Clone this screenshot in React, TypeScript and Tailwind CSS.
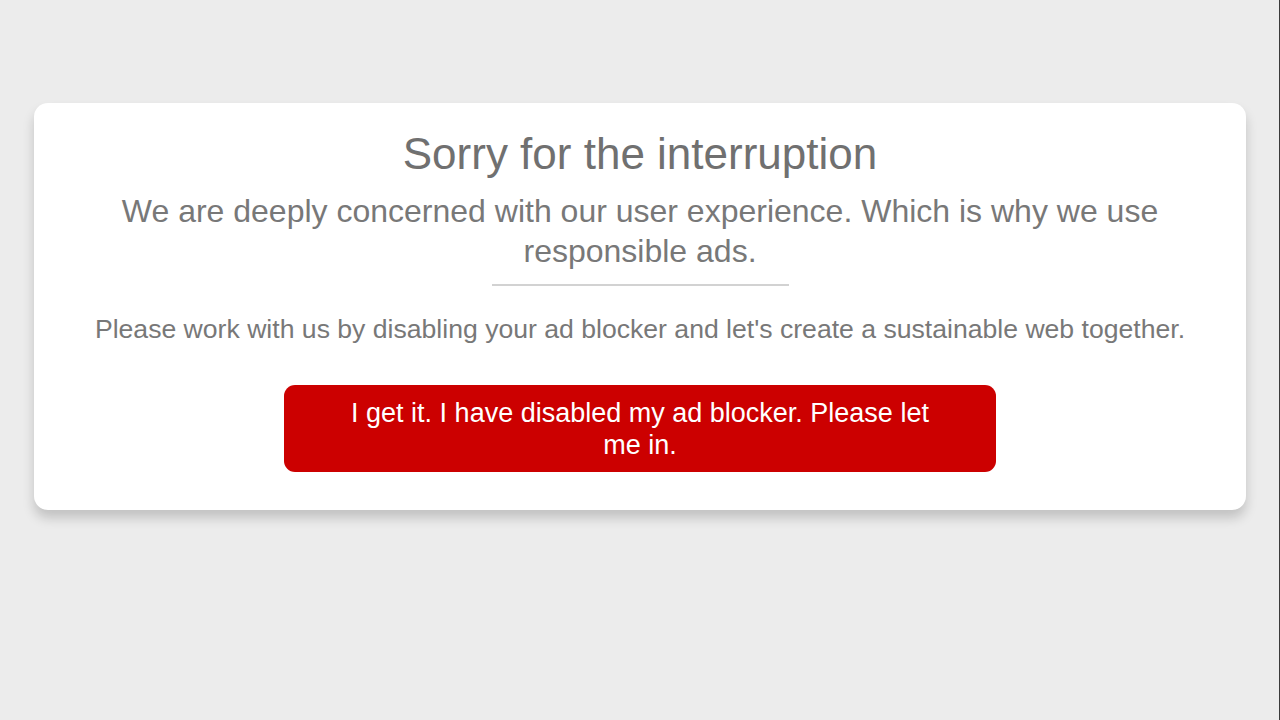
export default function App() {
  return (
    <div
      className="min-h-screen w-full bg-[#ececec] border-r border-[#3a3a3a] pt-[103px] pl-[34px] pr-[33px]"
      style={{ fontFamily: '"Liberation Sans", Arial, sans-serif' }}
    >
      <div className="w-[1212px] h-[407px] bg-white rounded-[14px] shadow-[0_8px_12px_rgba(0,0,0,0.18)] flex flex-col items-center pt-[27px]">
        <h1 className="text-[44px] leading-[48px] text-[#707070]">Sorry for the interruption</h1>
        <p className="mt-[13px] w-[1100px] text-center text-[32px] leading-[40px] text-[#787878]">
          We are deeply concerned with our user experience. Which is why we use responsible ads.
        </p>
        <div className="mt-[13px] w-[297px] h-[2px] bg-[#d2d2d2]" />
        <p className="mt-[28px] text-[26.6px] leading-[30px] text-[#787878]">
          Please work with us by disabling your ad blocker and let's create a sustainable web together.
        </p>
        <button className="mt-[41px] w-[712px] h-[87px] rounded-[11px] bg-[#cc0000] text-white text-[27px] leading-[32px] px-[60px]">
          I get it. I have disabled my ad blocker. Please let me in.
        </button>
      </div>
    </div>
  );
}
